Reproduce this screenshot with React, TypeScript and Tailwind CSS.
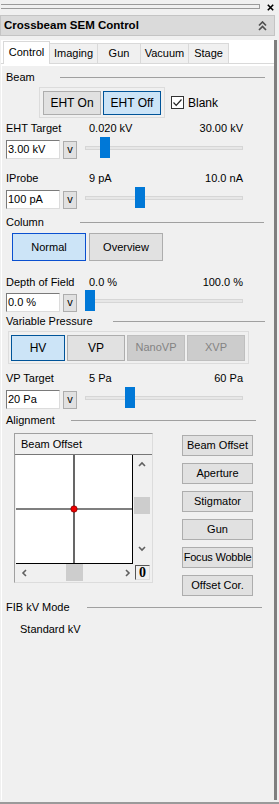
import React from 'react'

const sans = "font-['Liberation_Sans',Arial,sans-serif]"

type SliderRowProps = {
  value: string
  thumb: number // left offset of the thumb inside the track, px
}

// label row above an input: name on the left, min / max over the slider
const LabelRow = ({ label, min, max }: { label: string; min: string; max: string }) => (
  <div className="flex w-[241px] h-[14px] leading-[14px] text-[11px]">
    <span className="w-[86px] pl-[4px]">{label}</span>
    <span className="flex-1 pl-[1px]">{min}</span>
    <span className="text-right">{max}</span>
  </div>
)

const SliderRow = ({ value, thumb }: SliderRowProps) => (
  <div className="flex items-start h-[19px]">
    <div className="ml-[4px] w-[54px] h-[19px] bg-white border border-[#7a7a7a] border-r-[#dcdcdc] border-b-[#dcdcdc] text-[11px] leading-[17px] pl-[1px]">
      {value}
    </div>
    <div className="ml-[3px] mt-[1px] w-[14px] h-[18px] bg-[#e1e1e1] border border-[#adadad] text-[11px] leading-[15px] text-center">
      v
    </div>
    <div className="relative ml-[8px] mt-[-3px] w-[158px] h-[21px]">
      <div className="absolute left-0 right-0 top-[9px] h-[4px] bg-[#e7e7e7] border border-[#d6d6d6]" />
      <div
        className="absolute top-0 w-[10px] h-[21px] bg-[#0078d7]"
        style={{ left: thumb }}
      />
    </div>
  </div>
)

const Header = ({ label, labelW, lineW }: { label: string; labelW: string; lineW: string }) => (
  <div className="flex items-center h-[14px] text-[11px] leading-[14px]">
    <span className={`${labelW} pl-[4px]`}>{label}</span>
    <div className={`${lineW} border-t border-[#a0a0a0]`} />
  </div>
)

const Btn = ({ children, className = '' }: { children: React.ReactNode; className?: string }) => (
  <div
    className={`flex items-center justify-center whitespace-nowrap text-[11px] bg-[#e1e1e1] border border-[#adadad] ${className}`}
  >
    {children}
  </div>
)

const Chevron = ({ dir }: { dir: 'up' | 'down' | 'left' | 'right' }) => {
  const d = {
    up: 'M1 5 L4 2 L7 5',
    down: 'M1 2 L4 5 L7 2',
    left: 'M5 1 L2 4 L5 7',
    right: 'M2 1 L5 4 L2 7',
  }[dir]
  return (
    <svg width="8" height="8" viewBox="0 0 8 8">
      <path d={d} fill="none" stroke="#606060" strokeWidth="1.6" />
    </svg>
  )
}

export default function App() {
  return (
    <div className={`${sans} w-[279px] h-[804px] bg-[#f0f0f0] text-black flex flex-col overflow-hidden`}>
      {/* grip */}
      <div className="h-[15px] flex items-start">
        <div className="ml-[1px] mt-[4px] w-[259px] h-[5px] border-y border-r border-[#9a9a9a]" />
        <svg className="ml-[7px] mt-[4px]" width="7" height="7" viewBox="0 0 7 7">
          <path d="M0.8 0.8 L6.2 6.2 M6.2 0.8 L0.8 6.2" stroke="#000" strokeWidth="1.6" />
        </svg>
      </div>

      {/* title bar */}
      <div className="w-[275px] h-[21px] bg-[#dadada] border border-[#c4c4c4] flex items-center justify-between pl-[3px] pr-[7px]">
        <span className="text-[11.5px] font-bold">Crossbeam SEM Control</span>
        <svg width="9" height="10" viewBox="0 0 9 10">
          <path d="M1 4.5 L4.5 1 L8 4.5 M1 9 L4.5 5.5 L8 9" fill="none" stroke="#505050" strokeWidth="1.7" />
        </svg>
      </div>

      {/* tab control */}
      <div className="mt-[4px] ml-[1px] w-[276px] h-[760px] bg-white border-r-[3px] border-[#7f7f7f] flex flex-col">
        <div className="h-[24px] flex items-end pl-[2px] border-b border-[#d9d9d9] text-[11px]">
          <div className="w-[47px] h-[23px] mb-[-1px] bg-white border-x border-t border-[#d9d9d9] flex items-center justify-center pb-[2px]">
            Control
          </div>
          <div className="w-[48px] h-[20px] bg-[#f0f0f0] border-r border-t border-[#d9d9d9] flex items-center justify-center">Imaging</div>
          <div className="w-[43px] h-[20px] bg-[#f0f0f0] border-r border-t border-[#d9d9d9] flex items-center justify-center">Gun</div>
          <div className="w-[48px] h-[20px] bg-[#f0f0f0] border-r border-t border-[#d9d9d9] flex items-center justify-center">Vacuum</div>
          <div className="w-[40px] h-[20px] bg-[#f0f0f0] border-r border-t border-[#d9d9d9] flex items-center justify-center">Stage</div>
        </div>

        <div className="ml-[1px] mt-[2px] flex-1 bg-[#f0f0f0] flex flex-col">
          <div className="mt-[4px]">
            <Header label="Beam" labelW="w-[58px]" lineW="w-[205px]" />
          </div>
          <div className="mt-[3px] flex items-center h-[31px]">
            <div className="ml-[37px] w-[126px] h-[31px] border border-[#dcdcdc] flex items-center gap-[2px] pl-[3px]">
              <Btn className="w-[58px] h-[24px] text-[12px]">EHT On</Btn>
              <div className="w-[58px] h-[24px] bg-[#cce4f7] border border-[#005499] flex items-center justify-center text-[12px]">
                EHT Off
              </div>
            </div>
            <div className="ml-[6px] w-[13px] h-[13px] bg-white border border-[#333]">
              <svg width="11" height="11" viewBox="0 0 11 11">
                <path d="M1.5 5.5 L4.2 8.3 L9.5 2.5" fill="none" stroke="#222" strokeWidth="1.2" />
              </svg>
            </div>
            <span className="ml-[4px] text-[12px]">Blank</span>
          </div>

          <div className="mt-[3px]">
            <LabelRow label="EHT Target" min="0.020 kV" max="30.00 kV" />
          </div>
          <div className="mt-[5px]">
            <SliderRow value="3.00 kV" thumb={15} />
          </div>

          <div className="mt-[12px]">
            <LabelRow label="IProbe" min="9 pA" max="10.0 nA" />
          </div>
          <div className="mt-[5px]">
            <SliderRow value="100 pA" thumb={50} />
          </div>

          <div className="mt-[6px]">
            <Header label="Column" labelW="w-[78px]" lineW="w-[184px]" />
          </div>
          <div className="mt-[4px] flex gap-[3px] ml-[10px] h-[28px]">
            <div className="w-[74px] h-[28px] bg-[#cce4f7] border border-[#0a50d0] flex items-center justify-center text-[11px]">
              Normal
            </div>
            <Btn className="w-[74px] h-[28px]">Overview</Btn>
          </div>

          <div className="mt-[14px]">
            <LabelRow label="Depth of Field" min="0.0 %" max="100.0 %" />
          </div>
          <div className="mt-[4px]">
            <SliderRow value="0.0 %" thumb={0} />
          </div>

          <div className="mt-[2px]">
            <Header label="Variable Pressure" labelW="w-[111px]" lineW="w-[152px]" />
          </div>
          <div className="mt-[3px] ml-[6px] w-[241px] h-[33px] border border-[#dcdcdc] flex items-center gap-[2px] pl-[2px]">
            <div className="w-[54px] h-[26px] bg-[#cce4f7] border border-[#005499] flex items-center justify-center text-[12px]">
              HV
            </div>
            <Btn className="w-[58px] h-[26px] text-[12px]">VP</Btn>
            <div className="w-[58px] h-[26px] bg-[#cccccc] border border-[#bfbfbf] text-[#838383] flex items-center justify-center text-[11px]">
              NanoVP
            </div>
            <div className="w-[58px] h-[26px] bg-[#cccccc] border border-[#bfbfbf] text-[#838383] flex items-center justify-center text-[11px]">
              XVP
            </div>
          </div>

          <div className="mt-[7px]">
            <LabelRow label="VP Target" min="5 Pa" max="60 Pa" />
          </div>
          <div className="mt-[5px]">
            <SliderRow value="20 Pa" thumb={40} />
          </div>

          <div className="mt-[4px]">
            <Header label="Alignment" labelW="w-[69px]" lineW="w-[185px]" />
          </div>

          <div className="mt-[6px] flex h-[163px]">
            {/* joystick panel */}
            <div className="ml-[12px] w-[139px] h-[150px] border border-[#a0a0a0] border-r-[#dcdcdc] border-b-[#dcdcdc] flex flex-col">
              <div className="h-[21px] border-b border-[#777] pl-[6px] flex items-center text-[11px]">Beam Offset</div>
              <div className="flex h-[109px]">
                <div className="ml-[1px] w-[117px] h-[109px] bg-white border-r border-b border-black">
                  <svg width="116" height="108" viewBox="0 0 116 108">
                    <line x1="58" y1="0" x2="58" y2="108" stroke="#000" strokeWidth="1.2" />
                    <line x1="0" y1="54" x2="116" y2="54" stroke="#000" strokeWidth="1.2" />
                    <circle cx="58" cy="54" r="3.2" fill="#ee0000" stroke="#600" strokeWidth="0.6" />
                  </svg>
                </div>
                <div className="w-[18px] flex flex-col items-center">
                  <div className="mt-[6px]">
                    <Chevron dir="up" />
                  </div>
                  <div className="mt-[28px] w-[16px] h-[17px] bg-[#cdcdcd]" />
                  <div className="mt-[31px]">
                    <Chevron dir="down" />
                  </div>
                </div>
              </div>
              <div className="flex h-[17px] items-center">
                <div className="ml-[1px] w-[117px] h-[17px] flex items-center">
                  <div className="ml-[5px]">
                    <Chevron dir="left" />
                  </div>
                  <div className="ml-[37px] w-[17px] h-[17px] bg-[#cdcdcd]" />
                  <div className="ml-[41px]">
                    <Chevron dir="right" />
                  </div>
                </div>
                <div className="ml-[2px] w-[15px] h-[15px] border border-[#555] border-r-[#ddd] border-b-[#ddd] flex items-center justify-center font-['Liberation_Serif',serif] text-[14px] leading-[14px] font-bold">
                  0
                </div>
              </div>
            </div>

            <div className="ml-[29px] mt-[2px] flex flex-col gap-[7px]">
              <Btn className="w-[71px] h-[21px]">Beam Offset</Btn>
              <Btn className="w-[71px] h-[21px]">Aperture</Btn>
              <Btn className="w-[71px] h-[21px]">Stigmator</Btn>
              <Btn className="w-[71px] h-[21px]">Gun</Btn>
              <Btn className="w-[71px] h-[21px] text-[10.5px] tracking-[-0.2px]">Focus Wobble</Btn>
              <Btn className="w-[71px] h-[21px]">Offset Cor.</Btn>
            </div>
          </div>

          <div className="mt-[4px]">
            <Header label="FIB kV Mode" labelW="w-[85px]" lineW="w-[175px]" />
          </div>
          <div className="mt-[8px] pl-[18px] h-[14px] leading-[14px] text-[11px]">Standard kV</div>
        </div>
      </div>

      <div className="mt-[2px] h-[2px] bg-[#9a9a9a]" />
    </div>
  )
}
